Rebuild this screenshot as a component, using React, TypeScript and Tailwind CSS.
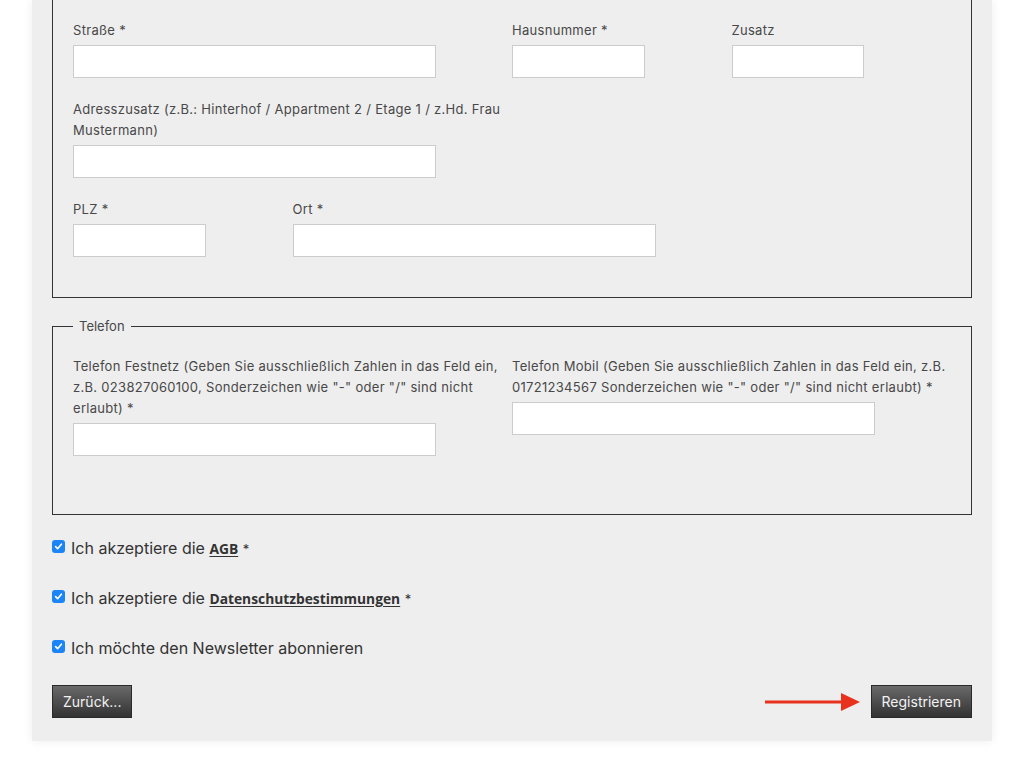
import type { ReactNode } from "react";

function Label({ children }: { children: ReactNode }) {
  return (
    <label className="block mb-1 text-[13px] tracking-[0.3px] leading-[21px] text-[#484848]">{children}</label>
  );
}

function Input({ w }: { w: string }) {
  return <input type="text" className={`${w} block h-[33px] bg-white border border-[#cccccc] outline-none`} />;
}

function Check({ children }: { children: ReactNode }) {
  return (
    <div className="flex items-center h-[20px]">
      <span className="w-[13px] h-[13px] rounded-[3px] bg-[#1b84f6] flex items-center justify-center mr-[6px] -mt-[3px]">
        <svg width="9" height="9" viewBox="0 0 10 10" fill="none">
          <path d="M1.8 5.2 L4 7.4 L8.2 2.4" stroke="white" strokeWidth="1.8" strokeLinecap="round" strokeLinejoin="round" />
        </svg>
      </span>
      <span className="text-[16px] text-[#333]">{children}</span>
    </div>
  );
}

function LinkText({ children }: { children: ReactNode }) {
  return (
    <a className="font-['Open_Sans',sans-serif] font-bold text-[13.8px] text-[#333] underline underline-offset-2">
      {children}
    </a>
  );
}

export default function App() {
  return (
    <div className="bg-white min-h-screen font-['Inter',sans-serif] overflow-hidden">
      <div className="mx-[32px] bg-[#eeeeee] shadow-[0_0_10px_rgba(0,0,0,0.07)] px-[20px] pb-[23px]">
        <div className="border border-[#333] border-t-0 pt-[20px] px-[20px] pb-[40px]">
          <div className="grid grid-cols-4">
            <div className="col-span-2">
              <Label>Straße *</Label>
              <Input w="w-[363px]" />
            </div>
            <div>
              <Label>Hausnummer *</Label>
              <Input w="w-[133px]" />
            </div>
            <div>
              <Label>Zusatz</Label>
              <Input w="w-[132px]" />
            </div>
            <div className="col-span-2 mt-[21px]">
              <Label>Adresszusatz (z.B.: Hinterhof / Appartment 2 / Etage 1 / z.Hd. Frau Mustermann)</Label>
              <Input w="w-[363px]" />
            </div>
            <div className="col-span-2" />
            <div className="mt-[21px]">
              <Label>PLZ *</Label>
              <Input w="w-[133px]" />
            </div>
            <div className="col-span-2 mt-[21px]">
              <Label>Ort *</Label>
              <Input w="w-[363px]" />
            </div>
          </div>
        </div>

        <fieldset className="mt-[18px] border border-[#333] px-[20px] pt-[20px] pb-[58px]">
          <legend className="ml-0 px-[6px] text-[13px] leading-[20px] text-[#484848]">Telefon</legend>
          <div className="grid grid-cols-2 items-start">
            <div>
              <Label>
                Telefon Festnetz (Geben Sie ausschließlich Zahlen in das Feld ein, z.B. 023827060100, Sonderzeichen wie "-" oder "/" sind nicht erlaubt) *
              </Label>
              <Input w="w-[363px]" />
            </div>
            <div>
              <Label>
                Telefon Mobil (Geben Sie ausschließlich Zahlen in das Feld ein, z.B. 01721234567 Sonderzeichen wie "-" oder "/" sind nicht erlaubt) *
              </Label>
              <Input w="w-[363px]" />
            </div>
          </div>
        </fieldset>

        <div className="mt-[23px] flex flex-col gap-[30px]">
          <Check>
            Ich akzeptiere die <LinkText>AGB</LinkText> <span className="text-[13px]">*</span>
          </Check>
          <Check>
            Ich akzeptiere die <LinkText>Datenschutzbestimmungen</LinkText> <span className="text-[13px]">*</span>
          </Check>
          <Check>Ich möchte den Newsletter abonnieren</Check>
        </div>

        <div className="mt-[27px] flex items-center justify-between">
          <button className="h-[33px] px-[10px] border border-[#2a2a2a] bg-gradient-to-b from-[#6a6a6a] to-[#333] text-[14px] text-[#f2f2f2]">
            Zurück...
          </button>
          <div className="flex items-center">
            <svg width="96" height="20" viewBox="0 0 96 20" className="mr-[10px]">
              <line x1="0" y1="10" x2="80" y2="10" stroke="#e8321e" strokeWidth="3" />
              <polygon points="76,1 95,10 76,19" fill="#e8321e" />
            </svg>
            <button className="h-[33px] px-[10px] border border-[#2a2a2a] bg-gradient-to-b from-[#6a6a6a] to-[#333] text-[14px] text-[#f2f2f2]">
              Registrieren
            </button>
          </div>
        </div>
      </div>
    </div>
  );
}
